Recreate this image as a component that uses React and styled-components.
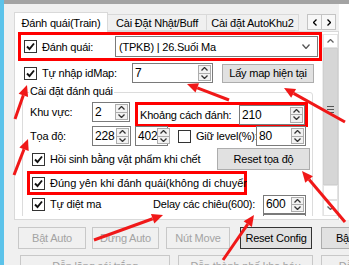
import React from "react";
import styled, { createGlobalStyle } from "styled-components";

const GlobalStyle = createGlobalStyle`
    html, body {
        margin: 0;
        padding: 0;
        background: #f0f0f0;
    }
    body {
        font-family: "Liberation Sans", Arial, sans-serif;
        font-size: 11px;
        letter-spacing: -0.2px;
        color: #000;
    }
    * {
        box-sizing: border-box;
    }
`;

const Screen = styled.div`
    position: relative;
    width: 349px;
    height: 265px;
    overflow: hidden;
    display: flex;
`;

const BlueEdge = styled.div`
    width: 4px;
    flex: none;
    background: #5cc3ea;
`;

const Window = styled.div`
    flex: 1;
    display: flex;
    flex-direction: column;
    background: #f0f0f0;
    overflow: hidden;
`;

const TopEdge = styled.div`
    height: 4px;
    flex: none;
    background: #a3a3a3;
`;

const MainRow = styled.div`
    display: flex;
    flex: none;
`;

const SidePane = styled.div`
    flex: 1;
    background: #ffffff;
`;

const TabControl = styled.div`
    width: 325px;
    height: 208px;
    margin: 8px 0 0 10px;
    display: flex;
    flex-direction: column;
    flex: none;
`;

const TabStrip = styled.div`
    height: 19px;
    display: flex;
    align-items: flex-end;
    flex: none;
`;

const Tab = styled.div`
    position: relative;
    z-index: ${p => (p.$active ? 1 : 0)};
    width: ${p => p.$w}px;
    height: ${p => (p.$active ? 20 : 17)}px;
    margin-bottom: ${p => (p.$active ? -1 : 0)}px;
    margin-left: ${p => (p.$first ? 0 : -1)}px;
    background: ${p => (p.$active ? "#ffffff" : "#f0f0f0")};
    border: 1px solid #d9d9d9;
    border-bottom: ${p => (p.$active ? "none" : "1px solid #d9d9d9")};
    display: flex;
    align-items: center;
    justify-content: center;
    white-space: nowrap;
    flex: none;
`;

const TabArrows = styled.div`
    display: flex;
    align-self: flex-start;
    margin: 2px 3px 0 auto;
`;

const TabArrow = styled.div`
    width: 15px;
    height: 16px;
    border: 1px solid #c4c4c4;
    margin-left: ${p => (p.$joined ? -1 : 0)}px;
    background: #f7f7f7;
    display: flex;
    align-items: center;
    justify-content: center;
`;

const TabPage = styled.div`
    flex: 1;
    border: 1px solid #d9d9d9;
    background: #ffffff;
    display: flex;
    padding-bottom: 3px;
    min-height: 0;
`;

const Viewport = styled.div`
    flex: 1;
    overflow: hidden;
    display: flex;
    flex-direction: column;
`;

const Scrollbar = styled.div`
    width: 16px;
    flex: none;
    margin-top: 2px;
    display: flex;
    flex-direction: column;
    background: #f7f7f7;
    border-left: 1px solid #ececec;
`;

const ScrollButton = styled.div`
    height: ${p => p.$h}px;
    flex: none;
    display: flex;
    align-items: center;
    justify-content: center;
    background: #ffffff;
    border: 1px solid #e3e3e3;
`;

const ScrollThumb = styled.div`
    height: 137px;
    flex: none;
    background: #d6d6d6;
    border: 1px solid #cfcfcf;
    display: flex;
    align-items: center;
    justify-content: center;
`;

const ScrollTrack = styled.div`
    flex: 1;
    background: #ffffff;
    border: 1px solid #e3e3e3;
`;

const Grip = styled.div`
    width: 7px;
    height: 7px;
    border-top: 1px solid #555;
    border-bottom: 1px solid #555;
    display: flex;
    align-items: center;
    margin-top: -14px;
    &::after {
        content: "";
        flex: 1;
        height: 1px;
        background: #555;
    }
`;

const RedFrame = styled.div`
    border: 3px solid #ff0000;
    width: ${p => p.$w}px;
    height: ${p => p.$h}px;
    margin-left: ${p => p.$ml || 0}px;
    margin-top: ${p => p.$mt || 0}px;
    padding-left: ${p => p.$pl || 0}px;
    display: flex;
    align-items: center;
    flex: none;
    align-self: flex-start;
`;

const Row = styled.div`
    display: flex;
    align-items: center;
    height: ${p => p.$h || 20}px;
    margin-top: ${p => p.$mt || 0}px;
    padding-left: ${p => p.$pl || 0}px;
    flex: none;
`;

const Label = styled.div`
    width: ${p => p.$w}px;
    flex: none;
    white-space: nowrap;
`;

const CheckWrap = styled.div`
    display: flex;
    align-items: center;
    width: ${p => (p.$w ? `${p.$w}px` : "auto")};
    margin-left: ${p => p.$ml || 0}px;
    overflow: ${p => (p.$clip ? "hidden" : "visible")};
    flex: none;
    white-space: nowrap;
`;

const CheckBox = styled.div`
    width: 13px;
    height: 13px;
    border: 1px solid #333333;
    background: #ffffff;
    flex: none;
    display: flex;
    align-items: center;
    justify-content: center;
`;

const CheckText = styled.span`
    margin-left: 5px;
    letter-spacing: ${p => (p.$natural ? "0" : "inherit")};
`;

const Combo = styled.div`
    width: 203px;
    height: 21px;
    margin: 0 1px 0 auto;
    border: 1px solid #7a7a7a;
    background: #ffffff;
    display: flex;
    align-items: center;
    padding: 0 7px 0 3px;
`;

const ComboText = styled.span`
    flex: 1;
    white-space: nowrap;
`;

const NumBox = styled.div`
    width: ${p => p.$w}px;
    height: ${p => p.$h || 20}px;
    margin-left: ${p => p.$ml || 0}px;
    flex: none;
    border: 1px solid #7a7a7a;
    background: #ffffff;
    display: flex;
`;

const NumValue = styled.div`
    flex: 1;
    padding-left: 2px;
    display: flex;
    align-items: center;
    font-size: 12px;
`;

const Spin = styled.div`
    width: 13px;
    flex: none;
    display: flex;
    flex-direction: column;
    margin: 1px 1px 1px 0;
`;

const SpinButton = styled.div`
    flex: 1;
    border: 1px solid #adadad;
    margin-top: ${p => (p.$down ? -1 : 0)}px;
    background: #f2f2f2;
    display: flex;
    align-items: center;
    justify-content: center;
`;

const GroupBox = styled.div`
    width: 291px;
    height: 140px;
    margin: 9px 0 0 7px;
    border: 1px solid #dcdcdc;
    border-radius: 3px;
    display: flex;
    flex-direction: column;
    flex: none;
`;

const GroupTitle = styled.div`
    align-self: flex-start;
    margin: -9px 0 0 6px;
    padding: 0 1px;
    line-height: 14px;
    background: #ffffff;
`;

const WinButton = styled.div`
    width: ${p => p.$w}px;
    height: ${p => p.$h || 22}px;
    margin-left: ${p => p.$ml || 0}px;
    flex: none;
    display: flex;
    align-items: center;
    justify-content: center;
    white-space: nowrap;
    overflow: hidden;
    background: ${p => (p.$disabled ? "#f0f0f0" : "#e1e1e1")};
    border: 1px solid
        ${p => (p.$disabled ? "#c8c8c8" : p.$focus ? "#333333" : "#adadad")};
    color: ${p => (p.$disabled ? "#a3a3a3" : "#000000")};
`;

const ButtonRow = styled.div`
    display: flex;
    margin: ${p => p.$mt}px 0 0 ${p => p.$ml}px;
    flex: none;
`;

const Overlay = styled.svg`
    position: absolute;
    left: 0;
    top: 0;
    pointer-events: none;
`;

const Chevron = ({ dir, w = 7, h = 4, color = "#333" }) => {
    const points = {
        up: `0.5,${h - 0.5} ${w / 2},0.5 ${w - 0.5},${h - 0.5}`,
        down: `0.5,0.5 ${w / 2},${h - 0.5} ${w - 0.5},0.5`,
        left: `${w - 0.5},0.5 0.5,${h / 2} ${w - 0.5},${h - 0.5}`,
        right: `0.5,0.5 ${w - 0.5},${h / 2} 0.5,${h - 0.5}`
    }[dir];
    return (
        <svg width={w} height={h} viewBox={`0 0 ${w} ${h}`}>
            <polyline points={points} fill="none" stroke={color} strokeWidth="1.3" />
        </svg>
    );
};

const Check = ({ checked = true, w, ml, clip, natural, children }) => (
    <CheckWrap $w={w} $ml={ml} $clip={clip}>
        <CheckBox>
            {checked && (
                <svg width="11" height="11" viewBox="0 0 11 11">
                    <polyline
                        points="2,5.5 4.5,8 9,2.5"
                        fill="none"
                        stroke="#111"
                        strokeWidth="1.9"
                    />
                </svg>
            )}
        </CheckBox>
        <CheckText $natural={natural}>{children}</CheckText>
    </CheckWrap>
);

const Numeric = ({ value, w, h, ml }) => (
    <NumBox $w={w} $h={h} $ml={ml}>
        <NumValue>{value}</NumValue>
        <Spin>
            <SpinButton>
                <Chevron dir="up" w={7} h={4} />
            </SpinButton>
            <SpinButton $down>
                <Chevron dir="down" w={7} h={4} />
            </SpinButton>
        </Spin>
    </NumBox>
);

const arrows = [
    [15, 119, 27, 85],
    [14, 175, 28, 139],
    [229, 100, 187, 84],
    [345, 122, 284, 88],
    [345, 222, 302, 171],
    [223, 260, 254, 215],
    [94, 240, 163, 215]
];

const Arrow = ({ x1, y1, x2, y2 }) => {
    const dx = x2 - x1;
    const dy = y2 - y1;
    const len = Math.hypot(dx, dy);
    const ux = dx / len;
    const uy = dy / len;
    const bx = x2 - ux * 11;
    const by = y2 - uy * 11;
    const px = -uy * 5;
    const py = ux * 5;
    return (
        <g>
            <line x1={x1} y1={y1} x2={bx} y2={by} stroke="#f01818" strokeWidth="3" />
            <polygon
                points={`${x2},${y2} ${bx + px},${by + py} ${bx - px},${by - py}`}
                fill="#f01818"
            />
        </g>
    );
};

export default function App() {
    return (
        <Screen>
            <GlobalStyle />
            <BlueEdge />
            <Window>
                <TopEdge />
                <MainRow>
                    <TabControl>
                        <TabStrip>
                            <Tab $active $first $w={94}>
                                Đánh quái(Train)
                            </Tab>
                            <Tab $w={100}>Cài Đặt Nhật/Buff</Tab>
                            <Tab $w={93}>Cài đặt AutoKhu2</Tab>
                            <TabArrows>
                                <TabArrow>
                                    <Chevron dir="left" w={4} h={7} color="#000" />
                                </TabArrow>
                                <TabArrow $joined>
                                    <Chevron dir="right" w={4} h={7} color="#000" />
                                </TabArrow>
                            </TabArrows>
                        </TabStrip>
                        <TabPage>
                            <Viewport>
                                <RedFrame $w={304} $h={29} $ml={3} $pl={3}>
                                    <Check>Đánh quái:</Check>
                                    <Combo>
                                        <ComboText>(TPKB) | 26.Suối Ma</ComboText>
                                        <Chevron dir="down" w={8} h={5} color="#555" />
                                    </Combo>
                                </RedFrame>
                                <Row $mt={2} $pl={9}>
                                    <Check w={108}>Tự nhập idMap:</Check>
                                    <Numeric value="7" w={81} />
                                    <WinButton $w={92} $h={19} $ml={9}>
                                        Lấy map hiện tại
                                    </WinButton>
                                </Row>
                                <GroupBox>
                                    <GroupTitle>Cài đặt đánh quái</GroupTitle>
                                    <Row $mt={4} $pl={7}>
                                        <Label $w={62}>Khu vực:</Label>
                                        <Numeric value="2" w={38} />
                                        <RedFrame $w={173} $h={25} $ml={5} $pl={2}>
                                            <Label $w={99}>Khoảng cách đánh:</Label>
                                            <Numeric value="210" w={66} />
                                        </RedFrame>
                                    </Row>
                                    <Row $mt={4} $pl={7}>
                                        <Label $w={62}>Tọa độ:</Label>
                                        <Numeric value="228" w={39} />
                                        <Numeric value="402" w={33} ml={4} />
                                        <Check checked={false} w={78} ml={10}>
                                            Giữ level(%):
                                        </Check>
                                        <Numeric value="80" w={50} />
                                    </Row>
                                    <Row $mt={2} $h={22} $pl={9}>
                                        <Check w={185}>Hồi sinh bằng vật phẩm khi chết</Check>
                                        <WinButton $w={93}>Reset tọa độ</WinButton>
                                    </Row>
                                    <RedFrame $w={220} $h={24} $ml={4} $mt={1} $pl={2}>
                                        <Check w={215} clip natural>
                                            Đúng yên khi đánh quái(không di chuyển)
                                        </Check>
                                    </RedFrame>
                                    <Row $mt={-1} $pl={9}>
                                        <Check w={121}>Tự diệt ma</Check>
                                        <Label $w={110}>Delay các chiêu(600):</Label>
                                        <Numeric value="600" w={43} h={19} />
                                    </Row>
                                    <Row $mt={-1} $pl={240}>
                                        <Numeric value="10" w={43} h={19} />
                                    </Row>
                                </GroupBox>
                            </Viewport>
                            <Scrollbar>
                                <ScrollButton $h={14}>
                                    <Chevron dir="up" w={7} h={4} color="#606060" />
                                </ScrollButton>
                                <ScrollThumb>
                                    <Grip />
                                </ScrollThumb>
                                <ScrollTrack />
                                <ScrollButton $h={16}>
                                    <Chevron dir="down" w={7} h={4} color="#606060" />
                                </ScrollButton>
                            </Scrollbar>
                        </TabPage>
                    </TabControl>
                    <SidePane />
                </MainRow>
                <ButtonRow $mt={7} $ml={14}>
                    <WinButton $w={68} $disabled>
                        Bật Auto
                    </WinButton>
                    <WinButton $w={67} $ml={6} $disabled>
                        Dừng Auto
                    </WinButton>
                    <WinButton $w={64} $ml={7} $disabled>
                        Nút Move
                    </WinButton>
                    <WinButton $w={72} $ml={10} $focus>
                        Reset Config
                    </WinButton>
                    <WinButton $w={72} $ml={9}>
                        Bật Train
                    </WinButton>
                </ButtonRow>
                <ButtonRow $mt={6} $ml={16}>
                    <WinButton $w={150} $disabled>
                        Dẫn lăng sói trắng
                    </WinButton>
                    <WinButton $w={135} $ml={8} $disabled>
                        Dẫn thành phố kho báu
                    </WinButton>
                    <WinButton $w={66} $ml={8} $disabled>
                        Dẫn đi
                    </WinButton>
                </ButtonRow>
            </Window>
            <Overlay width="349" height="265" viewBox="0 0 349 265">
                {arrows.map(([x1, y1, x2, y2], i) => (
                    <Arrow key={i} x1={x1} y1={y1} x2={x2} y2={y2} />
                ))}
            </Overlay>
        </Screen>
    );
}
